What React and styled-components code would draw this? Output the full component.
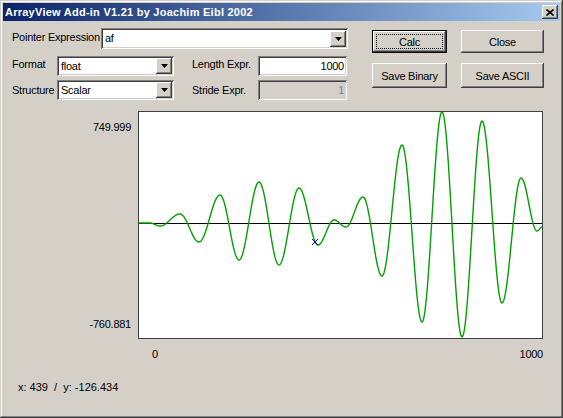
import React from "react"
import styled, { createGlobalStyle, css } from "styled-components"

const GlobalStyle = createGlobalStyle`
  html, body {
    margin: 0;
    padding: 0;
    background: #d4d0c8;
  }
  body {
    font-family: "Liberation Sans", Arial, sans-serif;
    font-size: 11px;
    letter-spacing: -0.25px;
    color: #000;
  }
`

const raised = css`
  box-shadow: inset -1px -1px #404040, inset 1px 1px #ffffff,
    inset -2px -2px #808080, inset 2px 2px #d4d0c8;
`

const sunken = css`
  box-shadow: inset 1px 1px #808080, inset -1px -1px #ffffff,
    inset 2px 2px #404040, inset -2px -2px #d4d0c8;
`

const Window = styled.div`
  width: 563px;
  height: 418px;
  box-sizing: border-box;
  padding: 3px;
  background: #d4d0c8;
  display: flex;
  flex-direction: column;
  box-shadow: inset -1px -1px #404040, inset 1px 1px #d4d0c8,
    inset -2px -2px #808080, inset 2px 2px #ffffff;
`

const TitleBar = styled.div`
  height: 18px;
  display: flex;
  align-items: center;
  justify-content: space-between;
  padding: 0 2px 0 2px;
  background: linear-gradient(90deg, #0a246a, #a6caf0);
`

const Title = styled.span`
  color: #fff;
  font-family: "Liberation Sans", Tahoma, sans-serif;
  font-weight: bold;
  font-size: 11px;
  letter-spacing: 0.25px;
`

const CaptionButton = styled.div`
  width: 16px;
  height: 14px;
  display: flex;
  align-items: center;
  justify-content: center;
  background: #d4d0c8;
  ${raised}
`

const Body = styled.div`
  flex: 1;
  display: flex;
  flex-direction: column;
  padding: 7px 0 0 9px;
`

const TopArea = styled.div`
  display: flex;
  align-items: flex-start;
`

const Form = styled.div`
  display: flex;
  flex-direction: column;
  gap: 7px;
  width: 336px;
`

const Row = styled.div`
  display: grid;
  grid-template-columns: ${(p) => p.$cols};
  align-items: center;
  height: ${(p) => p.$h || 20}px;
`

const SubRows = styled.div`
  display: flex;
  flex-direction: column;
  gap: 4px;
`

const Label = styled.span`
  white-space: nowrap;
  line-height: 13px;
  margin-top: ${(p) => p.$dy || 0}px;
`

const Field = styled.div`
  height: ${(p) => p.$h || 20}px;
  box-sizing: border-box;
  background: ${(p) => (p.$disabled ? "#d4d0c8" : "#fff")};
  color: ${(p) => (p.$disabled ? "#808080" : "#000")};
  display: flex;
  align-items: center;
  justify-content: ${(p) => (p.$right ? "flex-end" : "space-between")};
  padding: 2px 3px 2px 3px;
  ${sunken}
`

const FieldText = styled.span`
  padding-left: 1px;
  line-height: 13px;
`

const DropButton = styled.div`
  width: 16px;
  height: 16px;
  margin-right: -1px;
  box-sizing: border-box;
  background: #d4d0c8;
  display: flex;
  align-items: center;
  justify-content: center;
  ${raised}
`

const Buttons = styled.div`
  margin-left: 24px;
  margin-top: 2px;
  display: grid;
  grid-template-columns: 75px 83px;
  grid-template-rows: 23px 25px;
  column-gap: 14px;
  row-gap: 10px;
`

const Button = styled.div`
  box-sizing: border-box;
  display: flex;
  align-items: center;
  justify-content: center;
  background: #d4d0c8;
  position: relative;
  ${raised}
  ${(p) =>
    p.$default &&
    css`
      box-shadow: inset 0 0 0 1px #000, inset -2px -2px #404040,
        inset 2px 2px #ffffff, inset -3px -3px #808080;
    `}
`

const FocusRing = styled.span`
  position: absolute;
  inset: 4px;
  border: 1px dotted #000;
`

const ChartArea = styled.div`
  display: flex;
  margin-top: 11px;
  margin-left: -12px;
`

const YAxis = styled.div`
  width: 131px;
  height: 228px;
  display: flex;
  flex-direction: column;
  justify-content: space-between;
  align-items: flex-end;
  padding: 10px 0 9px 0;
  box-sizing: border-box;
  margin-right: 7px;
`

const Plot = styled.div`
  width: 405px;
  height: 228px;
  box-sizing: border-box;
  border: 1px solid #404040;
  background: #fff;
  display: flex;
`

const XAxis = styled.div`
  display: flex;
  justify-content: space-between;
  width: 391px;
  margin-left: 140px;
  margin-top: 9px;
  line-height: 13px;
`

const Status = styled.div`
  margin-top: 20px;
  margin-left: 6px;
  line-height: 13px;
  letter-spacing: 0;
  white-space: pre;
`

const ArrowDown = () => (
  <svg width="7" height="4" viewBox="0 0 7 4">
    <path d="M0 0h7L3.5 4z" fill="#000" />
  </svg>
)

const Combo = ({ value, h }) => (
  <Field $h={h}>
    <FieldText>{value}</FieldText>
    <DropButton>
      <ArrowDown />
    </DropButton>
  </Field>
)

// extrema of the plotted signal, in page pixels
const extrema = [
  [139, 223], [150, 223], [160, 226], [180, 214], [199, 242], [220, 195],
  [239, 260], [259, 182], [279, 265], [299, 188], [318, 245], [334, 220],
  [346, 227], [363, 197], [382, 276], [402, 145], [422, 322], [442, 112],
  [462, 337], [482, 121], [502, 303], [521, 178], [537, 231], [542, 227],
]

const buildPath = () => {
  const pts = []
  for (let i = 0; i < extrema.length - 1; i++) {
    const [x0, y0] = extrema[i]
    const [x1, y1] = extrema[i + 1]
    const steps = Math.max(1, (x1 - x0) * 2)
    for (let s = i === 0 ? 0 : 1; s <= steps; s++) {
      const t = s / steps
      const k = (1 - Math.cos(Math.PI * t)) / 2
      pts.push([x0 + (x1 - x0) * t - 139, y0 + (y1 - y0) * k - 112])
    }
  }
  return "M" + pts.map(([x, y]) => `${x.toFixed(2)} ${y.toFixed(2)}`).join("L")
}

const curve = buildPath()

const Chart = () => (
  <svg width="403" height="226" viewBox="0 0 403 226">
    <line x1="0" y1="111.5" x2="403" y2="111.5" stroke="#000" strokeWidth="1.2" />
    <path d={curve} fill="none" stroke="#00a000" strokeWidth="1.4" />
    <path d="M173 127l6 6M179 127l-6 6" stroke="#0000c0" strokeWidth="1" />
  </svg>
)

export default function App() {
  return (
    <>
      <GlobalStyle />
      <Window>
        <TitleBar>
          <Title>ArrayView Add-in V1.21 by Joachim Eibl 2002</Title>
          <CaptionButton>
            <svg width="8" height="7" viewBox="0 0 8 7">
              <path d="M0.5 0.5l7 6M7.5 0.5l-7 6" stroke="#000" strokeWidth="1.6" />
            </svg>
          </CaptionButton>
        </TitleBar>
        <Body>
          <TopArea>
            <Form>
              <Row $cols="89px 247px" $h={21}>
                <Label $dy={-3}>Pointer Expression</Label>
                <Combo value="af" h={21} />
              </Row>
              <SubRows>
                <Row $cols="45px 117px 18px 66px 89px">
                  <Label $dy={-3}>Format</Label>
                  <Combo value="float" />
                  <span />
                  <Label $dy={-3}>Length Expr.</Label>
                  <Field $right>
                    <FieldText>1000</FieldText>
                  </Field>
                </Row>
                <Row $cols="45px 117px 18px 66px 89px">
                  <Label>Structure</Label>
                  <Combo value="Scalar" />
                  <span />
                  <Label>Stride Expr.</Label>
                  <Field $right $disabled>
                    <FieldText>1</FieldText>
                  </Field>
                </Row>
              </SubRows>
            </Form>
            <Buttons>
              <Button $default>
                <FocusRing />
                Calc
              </Button>
              <Button>Close</Button>
              <Button>Save Binary</Button>
              <Button>Save ASCII</Button>
            </Buttons>
          </TopArea>
          <ChartArea>
            <YAxis>
              <span>749.999</span>
              <span>-760.881</span>
            </YAxis>
            <Plot>
              <Chart />
            </Plot>
          </ChartArea>
          <XAxis>
            <span>0</span>
            <span>1000</span>
          </XAxis>
          <Status>{"x: 439  /  y: -126.434"}</Status>
        </Body>
      </Window>
    </>
  )
}
